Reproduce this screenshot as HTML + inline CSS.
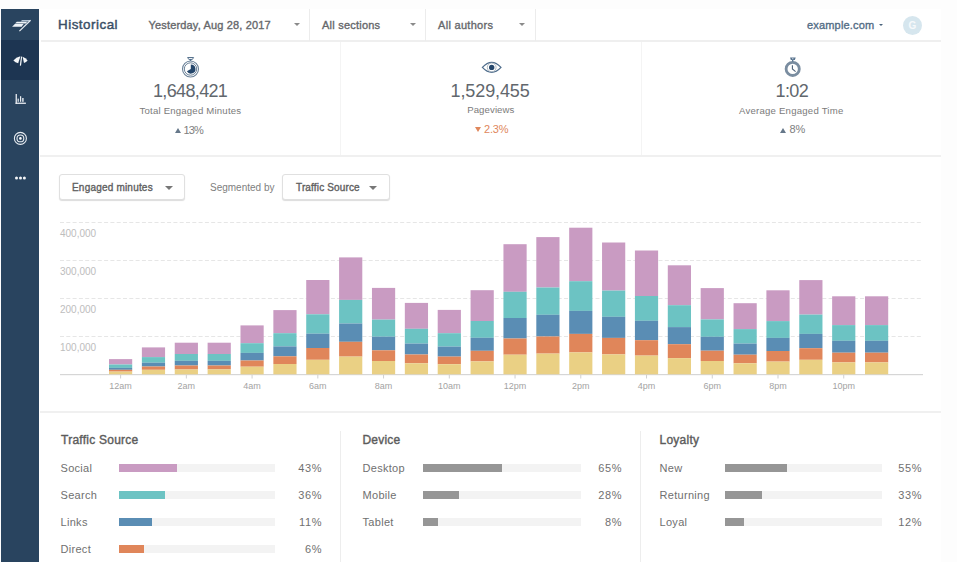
<!DOCTYPE html>
<html><head><meta charset="utf-8">
<style>
*{margin:0;padding:0;box-sizing:border-box}
html,body{width:957px;height:562px;overflow:hidden;background:#fdfdfd;font-family:"Liberation Sans",sans-serif}
.a{position:absolute;white-space:nowrap;line-height:1}
#main{position:absolute;left:39px;top:9px;width:902px;height:553px;background:#fff}
#side{position:absolute;left:1px;top:9px;width:38px;height:553px;background:#29445f}
.hl{position:absolute;background:#eeeeee}
.vl{position:absolute;background:#f1f1f1}
.caret{position:absolute;width:0;height:0;border-left:3.5px solid transparent;border-right:3.5px solid transparent;border-top:3.5px solid #8a8a8a}
.btn{position:absolute;background:#fff;border:1px solid #e0e0e0;border-radius:3px;box-shadow:0 1px 1px rgba(0,0,0,0.14)}
.track{position:absolute;height:8px;background:#f3f3f3}
.fill{position:absolute;left:0;top:0;height:8px}
.lbl{font-size:11px;color:#707070;letter-spacing:0.3px}
.pct{font-size:11px;color:#707070;text-align:right;letter-spacing:0.6px}
.ttl{font-size:12px;color:#5c5c5c;-webkit-text-stroke:0.4px #5c5c5c}
.num{font-size:18px;color:#61676d}
.sub{font-size:9.6px;color:#7b7b7b}
.dlt{font-size:11px;color:#7e7e7e}
.yl{font-size:10px;color:#bdbdbd}
.xl{font-size:9px;color:#a3a3a3}
</style></head><body>
<div id="main"></div>
<div id="side">
  <div style="position:absolute;left:0;top:31px;width:38px;height:40px;background:#1d3552"></div>
</div>
<svg class="a" style="left:0;top:0" width="40" height="200" viewBox="0 0 40 200">
  <!-- logo -->
  <g fill="#eef2f6">
    <polygon points="12.1,26.8 14.8,24 23.6,24 21.6,26.8"/>
    <polygon points="15,23.4 16.8,21.8 27.3,21.8 25.8,23.4"/>
    <polygon points="20.6,21.6 22,20 30.6,20 29.2,21.6" fill="#b4c4d4"/>
  </g>
  <line x1="30.6" y1="20.2" x2="19.4" y2="31.1" stroke="#e6ecf2" stroke-width="1.2"/>
  <!-- gauge -->
  <path d="M13.4,60.6 Q16,57.2 20.4,56.3 L18.2,63.2 Q15.2,62.6 13.4,60.6Z" fill="#f4f6f8"/>
  <path d="M22.6,56.8 Q25.8,58 27.6,60.6 Q26.2,62.6 24,63 L22.6,56.8Z" fill="#f4f6f8"/>
  <line x1="21.6" y1="56.6" x2="20.4" y2="65.6" stroke="#f4f6f8" stroke-width="1.2"/>
  <!-- chart -->
  <g fill="#e8edf2">
    <rect x="15.6" y="94" width="1.3" height="10"/>
    <rect x="15.6" y="102.6" width="10.3" height="1.3"/>
    <rect x="17.6" y="98.6" width="1.2" height="3.2"/>
    <rect x="20" y="96.2" width="1.2" height="5.6"/>
    <rect x="22.2" y="98" width="1.4" height="3.8"/>
  </g>
  <!-- target -->
  <circle cx="20.4" cy="138.4" r="6" fill="none" stroke="#e8edf2" stroke-width="1.1"/>
  <circle cx="20.4" cy="138.4" r="3.4" fill="none" stroke="#e8edf2" stroke-width="1.1"/>
  <circle cx="20.4" cy="138.4" r="1.3" fill="#fff"/>
  <!-- dots -->
  <circle cx="16.5" cy="178" r="1.5" fill="#f4f6f8"/>
  <circle cx="20.5" cy="178" r="1.5" fill="#f4f6f8"/>
  <circle cx="24.4" cy="178" r="1.5" fill="#f4f6f8"/>
</svg>

<!-- header -->
<div class="hl" style="left:41px;top:40px;width:900px;height:2px;background:#efefef"></div>
<div class="a" style="left:58px;top:17.6px;font-size:13.4px;color:#3a4f66;-webkit-text-stroke:0.45px #3a4f66;letter-spacing:0.5px">Historical</div>
<div class="a" style="left:148.5px;top:20.1px;font-size:11px;color:#66686b;-webkit-text-stroke:0.35px #66686b;letter-spacing:0.16px">Yesterday, Aug 28, 2017</div>
<div class="caret" style="left:293.5px;top:22.5px"></div>
<div class="vl" style="left:309px;top:9px;width:1px;height:32px;background:#ececec"></div>
<div class="a" style="left:322px;top:20.1px;font-size:11px;color:#66686b;-webkit-text-stroke:0.35px #66686b;letter-spacing:0.22px">All sections</div>
<div class="caret" style="left:409.5px;top:22.5px"></div>
<div class="vl" style="left:425px;top:9px;width:1px;height:32px;background:#ececec"></div>
<div class="a" style="left:438px;top:20.1px;font-size:11px;color:#66686b;-webkit-text-stroke:0.35px #66686b;letter-spacing:0.3px">All authors</div>
<div class="caret" style="left:519px;top:22.5px"></div>
<div class="vl" style="left:535px;top:9px;width:1px;height:32px;background:#ececec"></div>
<div class="a" style="left:807px;top:19.7px;font-size:11px;color:#536d86;-webkit-text-stroke:0.35px #536d86;letter-spacing:0.18px">example.com</div>
<div class="caret" style="left:879.2px;top:24px;border-top-color:#4a637c;border-left-width:2.7px;border-right-width:2.7px;border-top-width:2.8px"></div>
<div style="position:absolute;left:903px;top:16px;width:19px;height:19px;border-radius:50%;background:#d6e6ee"></div>
<div class="a" style="left:908.6px;top:21px;font-size:10px;font-weight:700;color:#f6f9fb">G</div>

<!-- metrics -->
<div class="vl" style="left:340px;top:42px;width:1px;height:113px;background:#f4f4f4"></div>
<div class="vl" style="left:641px;top:42px;width:1px;height:113px;background:#f4f4f4"></div>
<div class="hl" style="left:40px;top:155px;width:901px;height:2px;background:#f0f0f0"></div>

<svg class="a" style="left:180px;top:55px" width="22" height="24" viewBox="180 55 22 24">
  <path d="M187.6,57.5 H193.6 L192.4,59.4 H188.8 Z" fill="none" stroke="#58738e" stroke-width="1"/>
  <rect x="189.8" y="59" width="1.4" height="2" fill="#4d6c8a"/>
  <circle cx="190.5" cy="69" r="8" fill="none" stroke="#6b8299" stroke-width="1.1"/>
  <circle cx="190.5" cy="69" r="6.2" fill="none" stroke="#6b8299" stroke-width="1"/>
  <path d="M190.8,64.4 A4.6,4.6 0 1 1 186.9,71.3 L190.8,69 Z" fill="#24466b"/>
</svg>
<div class="a num" style="left:153px;top:81.8px;letter-spacing:-0.65px">1,648,421</div>
<div class="a sub" style="left:139.5px;top:106px;letter-spacing:0.2px">Total Engaged Minutes</div>
<div class="a" style="left:174.5px;top:128.3px;width:0;height:0;border-left:3.3px solid transparent;border-right:3.3px solid transparent;border-bottom:5.5px solid #66788a"></div>
<div class="a dlt" style="left:183.5px;top:124.8px;letter-spacing:-0.9px">13%</div>

<svg class="a" style="left:480px;top:60px" width="24" height="16" viewBox="480 60 24 16">
  <path d="M482.4,67.4 Q491.7,57.4 501,67.4 Q491.7,77.4 482.4,67.4 Z" fill="none" stroke="#4f6d8c" stroke-width="1.2"/>
  <circle cx="491.7" cy="67.4" r="4.4" fill="none" stroke="#9aa8b5" stroke-width="0.8"/>
  <circle cx="491.7" cy="67.4" r="2.7" fill="#24466b"/>
</svg>
<div class="a num" style="left:450.5px;top:81.8px;letter-spacing:-0.1px">1,529,455</div>
<div class="a sub" style="left:467.2px;top:104.9px;letter-spacing:0.1px">Pageviews</div>
<div class="a" style="left:475px;top:127.2px;width:0;height:0;border-left:3px solid transparent;border-right:3px solid transparent;border-top:5.5px solid #e0875c"></div>
<div class="a dlt" style="left:484px;top:124.4px;color:#e0875c;letter-spacing:-0.15px">2.3%</div>

<svg class="a" style="left:780px;top:55px" width="26" height="24" viewBox="780 55 26 24">
  <path d="M790,57.4 H795.7 L794.9,60 H790.8 Z" fill="#58738e"/><circle cx="792.8" cy="58.7" r="0.7" fill="#cfd8e0"/>
  <circle cx="792.7" cy="68.9" r="6.6" fill="none" stroke="#7a8da0" stroke-width="2.8"/><rect x="792" y="59.6" width="1.4" height="2" fill="#5b7691"/>
  <path d="M792.4,65.2 V69 L795.6,71.6" fill="none" stroke="#4d6178" stroke-width="1.1"/>
</svg>
<div class="a num" style="left:775.5px;top:81.8px;letter-spacing:-0.6px">1:02</div>
<div class="a sub" style="left:739px;top:106.4px;letter-spacing:0.22px">Average Engaged Time</div>
<div class="a" style="left:780px;top:127.8px;width:0;height:0;border-left:3px solid transparent;border-right:3px solid transparent;border-bottom:5.5px solid #66788a"></div>
<div class="a dlt" style="left:789.5px;top:124.4px">8%</div>

<!-- chart controls -->
<div class="btn" style="left:59px;top:174px;width:126px;height:26px"></div>
<div class="a" style="left:72px;top:183.2px;font-size:10px;color:#606060;-webkit-text-stroke:0.35px #606060;letter-spacing:0.2px">Engaged minutes</div>
<div class="caret" style="left:165px;top:186px;border-left-width:4.5px;border-right-width:4.5px;border-top-width:4.5px;border-top-color:#777"></div>
<div class="a" style="left:210px;top:183.2px;font-size:10px;color:#808080">Segmented by</div>
<div class="btn" style="left:282px;top:174px;width:108px;height:26px"></div>
<div class="a" style="left:296px;top:183.2px;font-size:10px;color:#606060;-webkit-text-stroke:0.35px #606060;letter-spacing:0.15px">Traffic Source</div>
<div class="caret" style="left:369px;top:186px;border-left-width:4.5px;border-right-width:4.5px;border-top-width:4.5px;border-top-color:#777"></div>

<!-- chart -->
<svg class="a" style="left:0;top:0" width="957" height="562" viewBox="0 0 957 562">
  <g stroke="#e6e6e6" stroke-width="1" stroke-dasharray="4 2.3">
    <line x1="60" y1="222.5" x2="922" y2="222.5"/>
    <line x1="60" y1="260.5" x2="922" y2="260.5"/>
    <line x1="60" y1="298.5" x2="922" y2="298.5"/>
    <line x1="60" y1="336.5" x2="922" y2="336.5"/>
  </g>
  <rect x="60" y="374" width="863" height="1.2" fill="#d6d6d6"/>
  <g fill="#d0d0d0">
<rect x="120.10" y="375" width="1" height="3.5"/>
<rect x="185.84" y="375" width="1" height="3.5"/>
<rect x="251.58" y="375" width="1" height="3.5"/>
<rect x="317.32" y="375" width="1" height="3.5"/>
<rect x="383.06" y="375" width="1" height="3.5"/>
<rect x="448.80" y="375" width="1" height="3.5"/>
<rect x="514.54" y="375" width="1" height="3.5"/>
<rect x="580.28" y="375" width="1" height="3.5"/>
<rect x="646.02" y="375" width="1" height="3.5"/>
<rect x="711.76" y="375" width="1" height="3.5"/>
<rect x="777.50" y="375" width="1" height="3.5"/>
<rect x="843.24" y="375" width="1" height="3.5"/>
  </g>
<rect x="109.00" y="359.10" width="23.2" height="5.40" fill="#c99bc2"/>
<rect x="109.00" y="364.50" width="23.2" height="3.40" fill="#6cc3c3"/>
<rect x="109.00" y="367.90" width="23.2" height="1.90" fill="#5a8db4"/>
<rect x="109.00" y="369.80" width="23.2" height="1.80" fill="#e0865a"/>
<rect x="109.00" y="371.60" width="23.2" height="2.70" fill="#ead084"/>
<rect x="141.87" y="347.40" width="23.2" height="9.70" fill="#c99bc2"/>
<rect x="141.87" y="357.10" width="23.2" height="5.60" fill="#6cc3c3"/>
<rect x="141.87" y="362.70" width="23.2" height="3.80" fill="#5a8db4"/>
<rect x="141.87" y="366.50" width="23.2" height="3.30" fill="#e0865a"/>
<rect x="141.87" y="369.80" width="23.2" height="4.50" fill="#ead084"/>
<rect x="174.74" y="342.70" width="23.2" height="11.30" fill="#c99bc2"/>
<rect x="174.74" y="354.00" width="23.2" height="6.80" fill="#6cc3c3"/>
<rect x="174.74" y="360.80" width="23.2" height="4.70" fill="#5a8db4"/>
<rect x="174.74" y="365.50" width="23.2" height="4.00" fill="#e0865a"/>
<rect x="174.74" y="369.50" width="23.2" height="4.80" fill="#ead084"/>
<rect x="207.61" y="342.70" width="23.2" height="11.30" fill="#c99bc2"/>
<rect x="207.61" y="354.00" width="23.2" height="6.80" fill="#6cc3c3"/>
<rect x="207.61" y="360.80" width="23.2" height="4.70" fill="#5a8db4"/>
<rect x="207.61" y="365.50" width="23.2" height="3.90" fill="#e0865a"/>
<rect x="207.61" y="369.40" width="23.2" height="4.90" fill="#ead084"/>
<rect x="240.48" y="325.40" width="23.2" height="17.80" fill="#c99bc2"/>
<rect x="240.48" y="343.20" width="23.2" height="9.70" fill="#6cc3c3"/>
<rect x="240.48" y="352.90" width="23.2" height="7.60" fill="#5a8db4"/>
<rect x="240.48" y="360.50" width="23.2" height="6.20" fill="#e0865a"/>
<rect x="240.48" y="366.70" width="23.2" height="7.60" fill="#ead084"/>
<rect x="273.35" y="310.10" width="23.2" height="23.10" fill="#c99bc2"/>
<rect x="273.35" y="333.20" width="23.2" height="13.20" fill="#6cc3c3"/>
<rect x="273.35" y="346.40" width="23.2" height="9.90" fill="#5a8db4"/>
<rect x="273.35" y="356.30" width="23.2" height="7.70" fill="#e0865a"/>
<rect x="273.35" y="364.00" width="23.2" height="10.30" fill="#ead084"/>
<rect x="306.22" y="280.00" width="23.2" height="34.30" fill="#c99bc2"/>
<rect x="306.22" y="314.30" width="23.2" height="19.40" fill="#6cc3c3"/>
<rect x="306.22" y="333.70" width="23.2" height="14.30" fill="#5a8db4"/>
<rect x="306.22" y="348.00" width="23.2" height="11.80" fill="#e0865a"/>
<rect x="306.22" y="359.80" width="23.2" height="14.50" fill="#ead084"/>
<rect x="339.09" y="257.40" width="23.2" height="42.50" fill="#c99bc2"/>
<rect x="339.09" y="299.90" width="23.2" height="23.60" fill="#6cc3c3"/>
<rect x="339.09" y="323.50" width="23.2" height="18.30" fill="#5a8db4"/>
<rect x="339.09" y="341.80" width="23.2" height="14.80" fill="#e0865a"/>
<rect x="339.09" y="356.60" width="23.2" height="17.70" fill="#ead084"/>
<rect x="371.96" y="287.90" width="23.2" height="31.70" fill="#c99bc2"/>
<rect x="371.96" y="319.60" width="23.2" height="17.10" fill="#6cc3c3"/>
<rect x="371.96" y="336.70" width="23.2" height="13.60" fill="#5a8db4"/>
<rect x="371.96" y="350.30" width="23.2" height="10.70" fill="#e0865a"/>
<rect x="371.96" y="361.00" width="23.2" height="13.30" fill="#ead084"/>
<rect x="404.83" y="302.90" width="23.2" height="25.90" fill="#c99bc2"/>
<rect x="404.83" y="328.80" width="23.2" height="14.80" fill="#6cc3c3"/>
<rect x="404.83" y="343.60" width="23.2" height="10.90" fill="#5a8db4"/>
<rect x="404.83" y="354.50" width="23.2" height="8.80" fill="#e0865a"/>
<rect x="404.83" y="363.30" width="23.2" height="11.00" fill="#ead084"/>
<rect x="437.70" y="309.90" width="23.2" height="23.30" fill="#c99bc2"/>
<rect x="437.70" y="333.20" width="23.2" height="13.40" fill="#6cc3c3"/>
<rect x="437.70" y="346.60" width="23.2" height="10.00" fill="#5a8db4"/>
<rect x="437.70" y="356.60" width="23.2" height="7.60" fill="#e0865a"/>
<rect x="437.70" y="364.20" width="23.2" height="10.10" fill="#ead084"/>
<rect x="470.57" y="290.20" width="23.2" height="30.80" fill="#c99bc2"/>
<rect x="470.57" y="321.00" width="23.2" height="16.80" fill="#6cc3c3"/>
<rect x="470.57" y="337.80" width="23.2" height="13.00" fill="#5a8db4"/>
<rect x="470.57" y="350.80" width="23.2" height="10.60" fill="#e0865a"/>
<rect x="470.57" y="361.40" width="23.2" height="12.90" fill="#ead084"/>
<rect x="503.44" y="244.20" width="23.2" height="47.60" fill="#c99bc2"/>
<rect x="503.44" y="291.80" width="23.2" height="26.20" fill="#6cc3c3"/>
<rect x="503.44" y="318.00" width="23.2" height="20.50" fill="#5a8db4"/>
<rect x="503.44" y="338.50" width="23.2" height="16.20" fill="#e0865a"/>
<rect x="503.44" y="354.70" width="23.2" height="19.60" fill="#ead084"/>
<rect x="536.31" y="237.10" width="23.2" height="50.40" fill="#c99bc2"/>
<rect x="536.31" y="287.50" width="23.2" height="27.30" fill="#6cc3c3"/>
<rect x="536.31" y="314.80" width="23.2" height="21.70" fill="#5a8db4"/>
<rect x="536.31" y="336.50" width="23.2" height="17.10" fill="#e0865a"/>
<rect x="536.31" y="353.60" width="23.2" height="20.70" fill="#ead084"/>
<rect x="569.18" y="227.70" width="23.2" height="53.50" fill="#c99bc2"/>
<rect x="569.18" y="281.20" width="23.2" height="29.70" fill="#6cc3c3"/>
<rect x="569.18" y="310.90" width="23.2" height="23.00" fill="#5a8db4"/>
<rect x="569.18" y="333.90" width="23.2" height="18.50" fill="#e0865a"/>
<rect x="569.18" y="352.40" width="23.2" height="21.90" fill="#ead084"/>
<rect x="602.05" y="242.50" width="23.2" height="48.10" fill="#c99bc2"/>
<rect x="602.05" y="290.60" width="23.2" height="26.20" fill="#6cc3c3"/>
<rect x="602.05" y="316.80" width="23.2" height="21.10" fill="#5a8db4"/>
<rect x="602.05" y="337.90" width="23.2" height="16.50" fill="#e0865a"/>
<rect x="602.05" y="354.40" width="23.2" height="19.90" fill="#ead084"/>
<rect x="634.92" y="250.50" width="23.2" height="45.50" fill="#c99bc2"/>
<rect x="634.92" y="296.00" width="23.2" height="24.80" fill="#6cc3c3"/>
<rect x="634.92" y="320.80" width="23.2" height="19.40" fill="#5a8db4"/>
<rect x="634.92" y="340.20" width="23.2" height="15.40" fill="#e0865a"/>
<rect x="634.92" y="355.60" width="23.2" height="18.70" fill="#ead084"/>
<rect x="667.79" y="265.30" width="23.2" height="39.90" fill="#c99bc2"/>
<rect x="667.79" y="305.20" width="23.2" height="21.90" fill="#6cc3c3"/>
<rect x="667.79" y="327.10" width="23.2" height="17.10" fill="#5a8db4"/>
<rect x="667.79" y="344.20" width="23.2" height="13.90" fill="#e0865a"/>
<rect x="667.79" y="358.10" width="23.2" height="16.20" fill="#ead084"/>
<rect x="700.66" y="288.10" width="23.2" height="31.30" fill="#c99bc2"/>
<rect x="700.66" y="319.40" width="23.2" height="17.40" fill="#6cc3c3"/>
<rect x="700.66" y="336.80" width="23.2" height="13.90" fill="#5a8db4"/>
<rect x="700.66" y="350.70" width="23.2" height="10.30" fill="#e0865a"/>
<rect x="700.66" y="361.00" width="23.2" height="13.30" fill="#ead084"/>
<rect x="733.53" y="303.20" width="23.2" height="25.90" fill="#c99bc2"/>
<rect x="733.53" y="329.10" width="23.2" height="14.50" fill="#6cc3c3"/>
<rect x="733.53" y="343.60" width="23.2" height="11.10" fill="#5a8db4"/>
<rect x="733.53" y="354.70" width="23.2" height="8.60" fill="#e0865a"/>
<rect x="733.53" y="363.30" width="23.2" height="11.00" fill="#ead084"/>
<rect x="766.40" y="290.30" width="23.2" height="30.80" fill="#c99bc2"/>
<rect x="766.40" y="321.10" width="23.2" height="16.80" fill="#6cc3c3"/>
<rect x="766.40" y="337.90" width="23.2" height="13.10" fill="#5a8db4"/>
<rect x="766.40" y="351.00" width="23.2" height="10.60" fill="#e0865a"/>
<rect x="766.40" y="361.60" width="23.2" height="12.70" fill="#ead084"/>
<rect x="799.27" y="280.10" width="23.2" height="34.50" fill="#c99bc2"/>
<rect x="799.27" y="314.60" width="23.2" height="19.30" fill="#6cc3c3"/>
<rect x="799.27" y="333.90" width="23.2" height="14.30" fill="#5a8db4"/>
<rect x="799.27" y="348.20" width="23.2" height="11.60" fill="#e0865a"/>
<rect x="799.27" y="359.80" width="23.2" height="14.50" fill="#ead084"/>
<rect x="832.14" y="296.30" width="23.2" height="28.80" fill="#c99bc2"/>
<rect x="832.14" y="325.10" width="23.2" height="15.70" fill="#6cc3c3"/>
<rect x="832.14" y="340.80" width="23.2" height="11.90" fill="#5a8db4"/>
<rect x="832.14" y="352.70" width="23.2" height="9.70" fill="#e0865a"/>
<rect x="832.14" y="362.40" width="23.2" height="11.90" fill="#ead084"/>
<rect x="865.01" y="296.30" width="23.2" height="28.80" fill="#c99bc2"/>
<rect x="865.01" y="325.10" width="23.2" height="15.70" fill="#6cc3c3"/>
<rect x="865.01" y="340.80" width="23.2" height="11.90" fill="#5a8db4"/>
<rect x="865.01" y="352.70" width="23.2" height="9.70" fill="#e0865a"/>
<rect x="865.01" y="362.40" width="23.2" height="11.90" fill="#ead084"/>

</svg>
<div class="a yl" style="left:60px;top:229.2px">400,000</div>
<div class="a yl" style="left:60px;top:267.2px">300,000</div>
<div class="a yl" style="left:60px;top:305.2px">200,000</div>
<div class="a yl" style="left:60px;top:343.2px">100,000</div>
<div class="a xl" style="left:80.60px;top:382.2px;width:80px;text-align:center">12am</div>
<div class="a xl" style="left:146.34px;top:382.2px;width:80px;text-align:center">2am</div>
<div class="a xl" style="left:212.08px;top:382.2px;width:80px;text-align:center">4am</div>
<div class="a xl" style="left:277.82px;top:382.2px;width:80px;text-align:center">6am</div>
<div class="a xl" style="left:343.56px;top:382.2px;width:80px;text-align:center">8am</div>
<div class="a xl" style="left:409.30px;top:382.2px;width:80px;text-align:center">10am</div>
<div class="a xl" style="left:475.04px;top:382.2px;width:80px;text-align:center">12pm</div>
<div class="a xl" style="left:540.78px;top:382.2px;width:80px;text-align:center">2pm</div>
<div class="a xl" style="left:606.52px;top:382.2px;width:80px;text-align:center">4pm</div>
<div class="a xl" style="left:672.26px;top:382.2px;width:80px;text-align:center">6pm</div>
<div class="a xl" style="left:738.00px;top:382.2px;width:80px;text-align:center">8pm</div>
<div class="a xl" style="left:803.74px;top:382.2px;width:80px;text-align:center">10pm</div>

<!-- bottom -->
<div class="hl" style="left:40px;top:411px;width:901px;height:2px;background:#f0f0f0"></div>
<div class="vl" style="left:340px;top:431px;width:1px;height:131px;background:#ededed"></div>
<div class="vl" style="left:640px;top:431px;width:1px;height:131px;background:#ededed"></div>

<div class="a ttl" style="left:61px;top:433.6px;letter-spacing:0.25px">Traffic Source</div>
<div class="a ttl" style="left:362.5px;top:433.6px;letter-spacing:0.2px">Device</div>
<div class="a ttl" style="left:659.5px;top:433.6px;letter-spacing:0.25px">Loyalty</div>
<div class="a lbl" style="left:60.5px;top:463.2px">Social</div>
<div class="track" style="left:118.5px;top:464px;width:156px"><div class="fill" style="width:58.7px;background:#c99bc2"></div></div>
<div class="a pct" style="left:262.1px;top:463.2px;width:60px">43%</div>
<div class="a lbl" style="left:60.5px;top:490.2px">Search</div>
<div class="track" style="left:118.5px;top:491px;width:156px"><div class="fill" style="width:46.2px;background:#6cc3c3"></div></div>
<div class="a pct" style="left:262.1px;top:490.2px;width:60px">36%</div>
<div class="a lbl" style="left:60.5px;top:517.2px">Links</div>
<div class="track" style="left:118.5px;top:518px;width:156px"><div class="fill" style="width:33.4px;background:#5a8db4"></div></div>
<div class="a pct" style="left:262.1px;top:517.2px;width:60px">11%</div>
<div class="a lbl" style="left:60.5px;top:544.2px">Direct</div>
<div class="track" style="left:118.5px;top:545px;width:156px"><div class="fill" style="width:25.5px;background:#e0865a"></div></div>
<div class="a pct" style="left:262.1px;top:544.2px;width:60px">6%</div>
<div class="a lbl" style="left:362.5px;top:463.2px">Desktop</div>
<div class="track" style="left:423px;top:464px;width:158px"><div class="fill" style="width:78.7px;background:#969696"></div></div>
<div class="a pct" style="left:562.1px;top:463.2px;width:60px">65%</div>
<div class="a lbl" style="left:362.5px;top:490.2px">Mobile</div>
<div class="track" style="left:423px;top:491px;width:158px"><div class="fill" style="width:35.6px;background:#969696"></div></div>
<div class="a pct" style="left:562.1px;top:490.2px;width:60px">28%</div>
<div class="a lbl" style="left:362.5px;top:517.2px">Tablet</div>
<div class="track" style="left:423px;top:518px;width:158px"><div class="fill" style="width:14.7px;background:#969696"></div></div>
<div class="a pct" style="left:562.1px;top:517.2px;width:60px">8%</div>
<div class="a lbl" style="left:659.5px;top:463.2px">New</div>
<div class="track" style="left:724.8px;top:464px;width:157.3px"><div class="fill" style="width:62.6px;background:#969696"></div></div>
<div class="a pct" style="left:862.1px;top:463.2px;width:60px">55%</div>
<div class="a lbl" style="left:659.5px;top:490.2px">Returning</div>
<div class="track" style="left:724.8px;top:491px;width:157.3px"><div class="fill" style="width:37px;background:#969696"></div></div>
<div class="a pct" style="left:862.1px;top:490.2px;width:60px">33%</div>
<div class="a lbl" style="left:659.5px;top:517.2px">Loyal</div>
<div class="track" style="left:724.8px;top:518px;width:157.3px"><div class="fill" style="width:18.8px;background:#969696"></div></div>
<div class="a pct" style="left:862.1px;top:517.2px;width:60px">12%</div>
</body></html>
